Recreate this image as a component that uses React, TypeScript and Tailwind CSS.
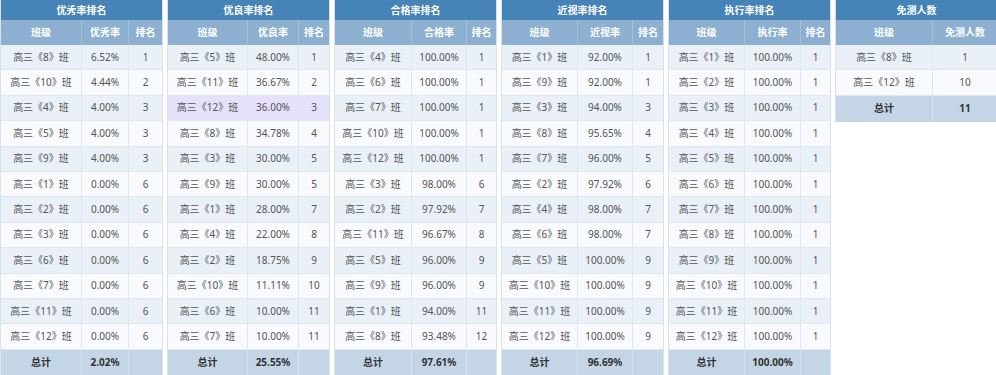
import React from 'react';

type Row = { name: string; value: string; rank?: string; hl?: boolean };

type Panel = {
  title: string;
  cols: string[];
  widths: string[];
  rows: Row[];
  total: string;
};

const cls = (n: number) => `高三《${n}》班`;

const mk = (list: [number, string, number?][]): Row[] =>
  list.map(([n, v, r]) => ({ name: cls(n), value: v, rank: r === undefined ? undefined : String(r) }));

const panels: Panel[] = [
  {
    title: '优秀率排名',
    cols: ['班级', '优秀率', '排名'],
    widths: ['w-[80px]', 'w-[47px]', 'flex-1'],
    rows: mk([
      [8, '6.52%', 1], [10, '4.44%', 2], [4, '4.00%', 3], [5, '4.00%', 3], [9, '4.00%', 3], [1, '0.00%', 6],
      [2, '0.00%', 6], [3, '0.00%', 6], [6, '0.00%', 6], [7, '0.00%', 6], [11, '0.00%', 6], [12, '0.00%', 6],
    ]),
    total: '2.02%',
  },
  {
    title: '优良率排名',
    cols: ['班级', '优良率', '排名'],
    widths: ['w-[79px]', 'w-[51px]', 'flex-1'],
    rows: mk([
      [5, '48.00%', 1], [11, '36.67%', 2], [12, '36.00%', 3], [8, '34.78%', 4], [3, '30.00%', 5], [9, '30.00%', 5],
      [1, '28.00%', 7], [4, '22.00%', 8], [2, '18.75%', 9], [10, '11.11%', 10], [6, '10.00%', 11], [7, '10.00%', 11],
    ]).map((r, i) => (i === 2 ? { ...r, hl: true } : r)),
    total: '25.55%',
  },
  {
    title: '合格率排名',
    cols: ['班级', '合格率', '排名'],
    widths: ['w-[76px]', 'w-[55px]', 'flex-1'],
    rows: mk([
      [4, '100.00%', 1], [6, '100.00%', 1], [7, '100.00%', 1], [10, '100.00%', 1], [12, '100.00%', 1], [3, '98.00%', 6],
      [2, '97.92%', 7], [11, '96.67%', 8], [5, '96.00%', 9], [9, '96.00%', 9], [1, '94.00%', 11], [8, '93.48%', 12],
    ]),
    total: '97.61%',
  },
  {
    title: '近视率排名',
    cols: ['班级', '近视率', '排名'],
    widths: ['w-[75px]', 'w-[55px]', 'flex-1'],
    rows: mk([
      [1, '92.00%', 1], [9, '92.00%', 1], [3, '94.00%', 3], [8, '95.65%', 4], [7, '96.00%', 5], [2, '97.92%', 6],
      [4, '98.00%', 7], [6, '98.00%', 7], [5, '100.00%', 9], [10, '100.00%', 9], [11, '100.00%', 9], [12, '100.00%', 9],
    ]),
    total: '96.69%',
  },
  {
    title: '执行率排名',
    cols: ['班级', '执行率', '排名'],
    widths: ['w-[75px]', 'w-[56px]', 'flex-1'],
    rows: mk([1, 2, 3, 4, 5, 6, 7, 8, 9, 10, 11, 12].map((n) => [n, '100.00%', 1] as [number, string, number])),
    total: '100.00%',
  },
  {
    title: '免测人数',
    cols: ['班级', '免测人数'],
    widths: ['w-[96px]', 'flex-1'],
    rows: mk([[8, '1'], [12, '10']]),
    total: '11',
  },
];

const Table: React.FC<{ p: Panel }> = ({ p }) => {
  const three = p.cols.length === 3;
  return (
    <div className="w-[163px] shrink-0 self-start border-x border-[#d9e1ea]">
      <div className="h-[20px] bg-[#4683b7] text-white text-[10px] font-bold flex items-center justify-center">
        {p.title}
      </div>
      <div className="h-[25px] bg-[#8db0d1] text-white text-[10px] font-bold flex">
        {p.cols.map((c, i) => (
          <div
            key={c}
            className={`${p.widths[i]} flex items-center justify-center ${i > 0 ? 'border-l border-[#a7c1db]' : ''}`}
          >
            {c}
          </div>
        ))}
      </div>
      {p.rows.map((r, i) => (
        <div
          key={i}
          className={`h-[25.4px] flex text-[10px] text-[#555] border-b border-[#e2e8ef] ${
            r.hl ? 'bg-[#e5e1fb]' : i % 2 === 0 ? 'bg-[#e9f0f7]' : 'bg-[#f8fafd]'
          }`}
        >
          <div className={`${p.widths[0]} flex items-center justify-center`}>{r.name}</div>
          <div className={`${p.widths[1]} flex items-center justify-center border-l border-[#dde5ee]`}>{r.value}</div>
          {three && (
            <div className={`${p.widths[2]} flex items-center justify-center border-l border-[#dde5ee]`}>{r.rank}</div>
          )}
        </div>
      ))}
      <div className="h-[26px] flex text-[10px] font-bold text-[#333] bg-[#c4d6e6]">
        <div className={`${p.widths[0]} flex items-center justify-center`}>总计</div>
        <div className={`${p.widths[1]} flex items-center justify-center border-l border-[#d6e1ec]`}>{p.total}</div>
        {three && <div className={`${p.widths[2]} border-l border-[#d6e1ec]`} />}
      </div>
    </div>
  );
};

export default function App() {
  return (
    <div
      className="w-[996px] h-[375px] overflow-hidden bg-white flex gap-[4px]"
      style={{ fontFamily: '"Noto Sans", "Noto Sans CJK SC", sans-serif' }}
    >
      {panels.map((p) => (
        <Table key={p.title} p={p} />
      ))}
    </div>
  );
}
